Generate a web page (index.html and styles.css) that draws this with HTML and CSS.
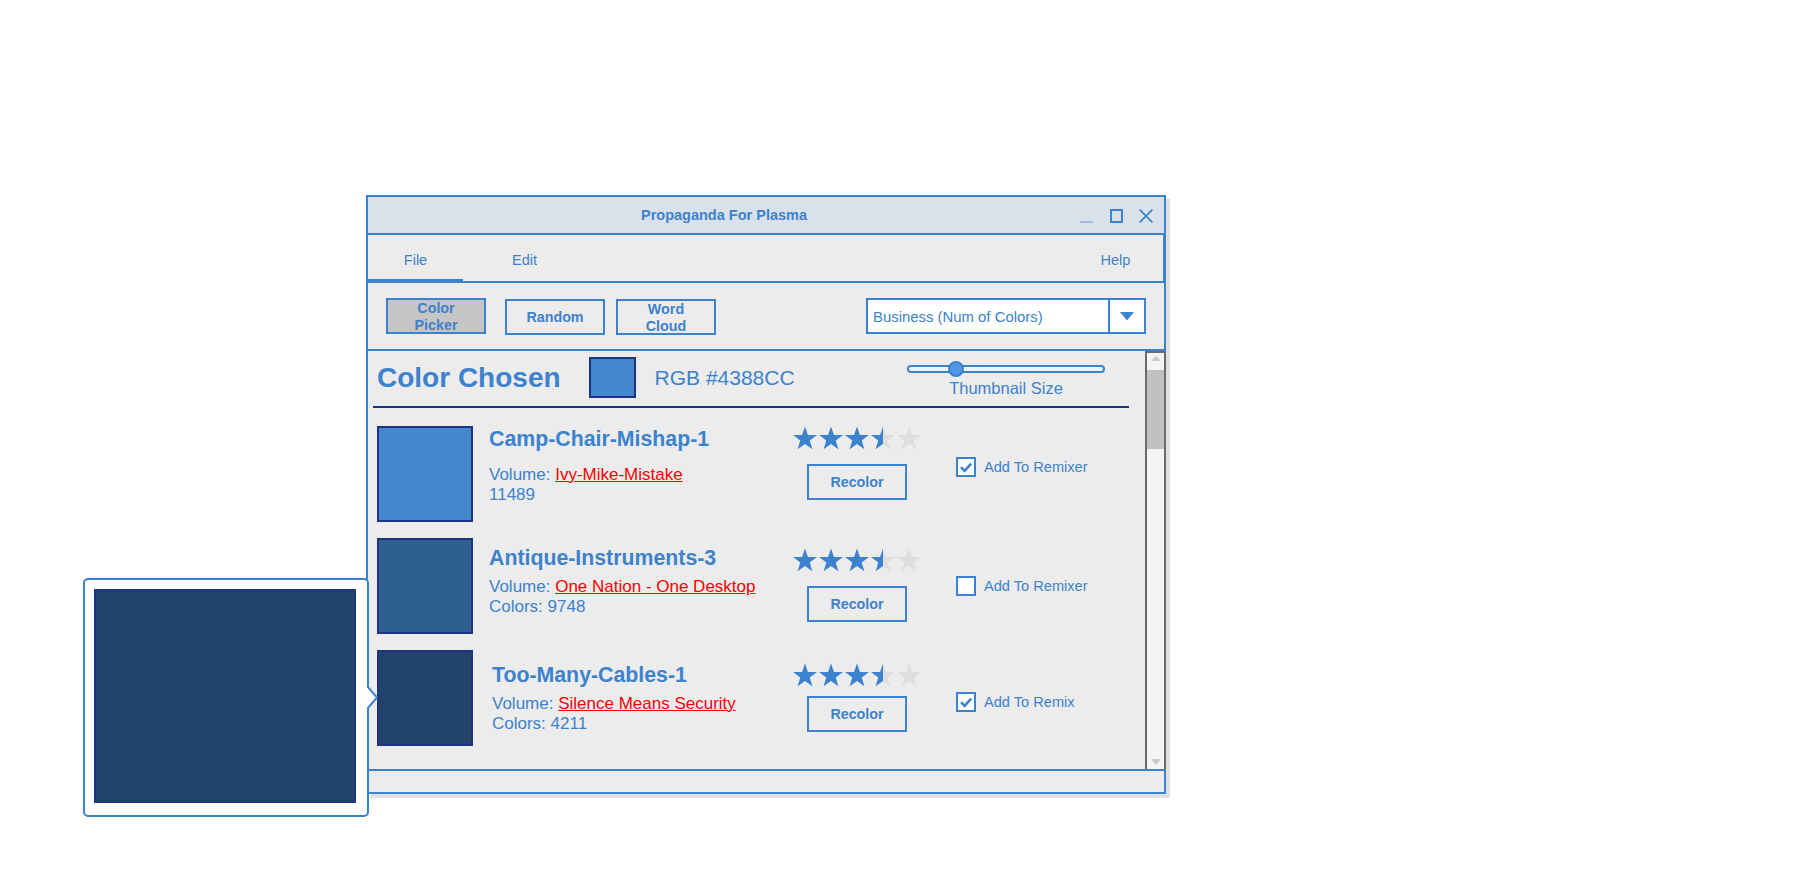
FILE: index.html
```html
<!DOCTYPE html>
<html lang="en">
<head>
<meta charset="utf-8">
<title>Propaganda For Plasma</title>
<link rel="stylesheet" href="styles.css">
</head>
<body>
<svg class="defs" width="0" height="0" aria-hidden="true">
  <defs>
    <polygon id="star" points="12,0.4 14.94,8.95 23.98,9.11 16.76,14.55 19.41,23.19 12,18 4.59,23.19 7.24,14.55 0.02,9.11 9.06,8.95"/>
    <linearGradient id="half" x1="0" y1="0" x2="1" y2="0">
      <stop offset="0.5" stop-color="#3d82cd"/>
      <stop offset="0.5" stop-color="#dedede"/>
    </linearGradient>
  </defs>
</svg>

<div class="window">
  <div class="titlebar">
    <div class="title">Propaganda For Plasma</div>
    <div class="controls">
      <svg class="ctl" width="13" height="14" viewBox="0 0 13 14"><line x1="0" y1="13" x2="13" y2="13" stroke="#9cbde6" stroke-width="2"/></svg>
      <svg class="ctl max" width="13" height="14" viewBox="0 0 13 14"><rect x="1" y="1" width="11" height="12" fill="none" stroke="#3d82cd" stroke-width="2"/></svg>
      <svg class="ctl close" width="14" height="14" viewBox="0 0 14 14"><path d="M0.6 0.6 L13.4 13.4 M13.4 0.6 L0.6 13.4" stroke="#3d82cd" stroke-width="1.6" fill="none"/></svg>
    </div>
  </div>

  <div class="menubar">
    <div class="menu-item active">File</div>
    <div class="menu-item edit">Edit</div>
    <div class="menu-item help">Help</div>
  </div>

  <div class="toolbar">
    <button class="tbtn selected">Color<br>Picker</button>
    <button class="tbtn random">Random</button>
    <button class="tbtn word">Word<br>Cloud</button>
    <div class="dropdown">
      <span class="dd-text">Business (Num of Colors)</span>
      <span class="dd-arrow"><svg width="14" height="9" viewBox="0 0 14 9"><polygon points="0,0 14,0 7,8.5" fill="#3d82cd"/></svg></span>
    </div>
  </div>

  <div class="content">
    <div class="list">
      <div class="header">
        <div class="chosen-label">Color Chosen</div>
        <div class="chosen-swatch"></div>
        <div class="rgb">RGB #4388CC</div>
        <div class="slider-group">
          <div class="slider">
            <div class="track"></div>
            <div class="knob"></div>
          </div>
          <div class="slider-label">Thumbnail Size</div>
        </div>
      </div>
      <div class="divider"></div>

      <div class="items">
        <div class="item row-1">
          <div class="thumb c1"></div>
          <div class="info">
            <div class="name">Camp-Chair-Mishap-1</div>
            <div class="meta">Volume: <a class="vol">Ivy-Mike-Mistake</a></div>
            <div class="meta">11489</div>
          </div>
          <div class="rating">
            <svg class="stars" width="128" height="24" viewBox="0 0 128 24">
              <use href="#star" x="0" fill="#3d82cd"/>
              <use href="#star" x="26" fill="#3d82cd"/>
              <use href="#star" x="52" fill="#3d82cd"/>
              <use href="#star" x="78" fill="url(#half)"/>
              <use href="#star" x="104" fill="#dedede"/>
            </svg>
            <button class="recolor">Recolor</button>
          </div>
          <label class="check">
            <svg class="box" width="20" height="20" viewBox="0 0 20 20"><rect x="1" y="1" width="18" height="18" fill="#fff" stroke="#3d82cd" stroke-width="2"/><path d="M5 10.2 L8.6 13.8 L15.2 6.6" fill="none" stroke="#3d82cd" stroke-width="2.6"/></svg>
            <span class="check-label">Add To Remixer</span>
          </label>
        </div>

        <div class="item row-2">
          <div class="thumb c2"></div>
          <div class="info">
            <div class="name">Antique-Instruments-3</div>
            <div class="meta">Volume: <a class="vol">One Nation - One Desktop</a></div>
            <div class="meta">Colors: 9748</div>
          </div>
          <div class="rating">
            <svg class="stars" width="128" height="24" viewBox="0 0 128 24">
              <use href="#star" x="0" fill="#3d82cd"/>
              <use href="#star" x="26" fill="#3d82cd"/>
              <use href="#star" x="52" fill="#3d82cd"/>
              <use href="#star" x="78" fill="url(#half)"/>
              <use href="#star" x="104" fill="#dedede"/>
            </svg>
            <button class="recolor">Recolor</button>
          </div>
          <label class="check">
            <svg class="box" width="20" height="20" viewBox="0 0 20 20"><rect x="1" y="1" width="18" height="18" fill="#fff" stroke="#3d82cd" stroke-width="2"/></svg>
            <span class="check-label">Add To Remixer</span>
          </label>
        </div>

        <div class="item row-3">
          <div class="thumb c3"></div>
          <div class="info">
            <div class="name">Too-Many-Cables-1</div>
            <div class="meta">Volume: <a class="vol">Silence Means Security</a></div>
            <div class="meta">Colors: 4211</div>
          </div>
          <div class="rating">
            <svg class="stars" width="128" height="24" viewBox="0 0 128 24">
              <use href="#star" x="0" fill="#3d82cd"/>
              <use href="#star" x="26" fill="#3d82cd"/>
              <use href="#star" x="52" fill="#3d82cd"/>
              <use href="#star" x="78" fill="url(#half)"/>
              <use href="#star" x="104" fill="#dedede"/>
            </svg>
            <button class="recolor">Recolor</button>
          </div>
          <label class="check">
            <svg class="box" width="20" height="20" viewBox="0 0 20 20"><rect x="1" y="1" width="18" height="18" fill="#fff" stroke="#3d82cd" stroke-width="2"/><path d="M5 10.2 L8.6 13.8 L15.2 6.6" fill="none" stroke="#3d82cd" stroke-width="2.6"/></svg>
            <span class="check-label">Add To Remix</span>
          </label>
        </div>
      </div>
    </div>

    <div class="scrollbar">
      <svg class="sb-up" width="10" height="5" viewBox="0 0 10 5"><polygon points="0,5 10,5 5,0" fill="#c8c8c8"/></svg>
      <div class="sb-thumb"></div>
      <div class="sb-fill"></div>
      <svg class="sb-down" width="10" height="6" viewBox="0 0 10 6"><polygon points="0,0 10,0 5,6" fill="#c8c8c8"/></svg>
    </div>
  </div>

  <div class="statusbar"></div>
</div>

<div class="popup">
  <div class="popup-swatch"></div>
  <svg class="popup-arrow" width="12" height="21" viewBox="0 0 12 21"><rect x="0" y="1" width="3.6" height="19" fill="#fff"/><polygon points="2,0.5 11,10.5 2,20.5" fill="#fff"/><polyline points="2,0 11,10.5 2,21" fill="none" stroke="#3d82cd" stroke-width="2"/></svg>
</div>
</body>
</html>
```

FILE: styles.css
```css
* {
  box-sizing: border-box;
}

html,
body {
  margin: 0;
  padding: 0;
  background: #ffffff;
}

body {
  position: relative;
  width: 1798px;
  height: 876px;
  overflow: hidden;
  font-family: "Liberation Sans", Arial, sans-serif;
  color: #3d82cd;
}

.defs {
  position: absolute;
  width: 0;
  height: 0;
  overflow: hidden;
}

/* ---------- window ---------- */
.window {
  position: absolute;
  left: 366px;
  top: 195px;
  width: 800px;
  height: 599px;
  border: 2px solid #3d82cd;
  background: #ececec;
  box-shadow: 4px 4px 0 #e1e1e1;
  display: flex;
  flex-direction: column;
}

.titlebar {
  height: 38px;
  flex: none;
  display: flex;
  align-items: center;
  background: #d9e1ea;
  border-bottom: 2px solid #3d82cd;
}

.title {
  flex: 1;
  text-align: center;
  font-size: 14.5px;
  font-weight: bold;
}

.controls {
  width: 84px;
  padding-right: 11px;
  padding-top: 2px;
  display: flex;
  align-items: center;
}

.ctl {
  display: block;
}

.ctl.max {
  margin-left: 17px;
}

.ctl.close {
  margin-left: 16px;
}

/* ---------- menu ---------- */
.menubar {
  height: 48px;
  flex: none;
  display: flex;
  border-bottom: 2px solid #3d82cd;
  border-right: 1px solid #3d82cd;
}

.menu-item {
  width: 95px;
  height: 46px;
  padding-top: 5px;
  line-height: 41px;
  text-align: center;
  font-size: 14.5px;
}

.menu-item.active {
  box-shadow: inset 0 -2px 0 #3d82cd;
}

.menu-item.edit {
  margin-left: 14px;
}

.menu-item.help {
  margin-left: auto;
}

/* ---------- toolbar ---------- */
.toolbar {
  height: 68px;
  flex: none;
  display: flex;
  align-items: center;
  padding: 0 18px;
  border-bottom: 2px solid #3d82cd;
}

.tbtn {
  width: 100px;
  height: 36px;
  padding: 0;
  border: 2px solid #3d82cd;
  background: transparent;
  color: #3d82cd;
  font-family: "Liberation Sans", Arial, sans-serif;
  font-size: 14.3px;
  font-weight: bold;
  line-height: 16.5px;
}

.tbtn.selected {
  background: #c5c5c5;
}

.tbtn.random {
  margin-left: 19px;
  margin-top: 2px;
}

.tbtn.word {
  margin-left: 11px;
  margin-top: 2px;
}

.dropdown {
  margin-left: auto;
  width: 280px;
  height: 36px;
  display: flex;
  border: 2px solid #3d82cd;
  background: #ffffff;
}

.dd-text {
  flex: 1;
  padding-left: 5px;
  padding-top: 1px;
  font-size: 14.9px;
  line-height: 32px;
}

.dd-arrow {
  width: 36px;
  border-left: 2px solid #3d82cd;
  display: flex;
  align-items: center;
  justify-content: center;
}

.dd-arrow svg {
  display: block;
}

/* ---------- content ---------- */
.content {
  height: 420px;
  flex: none;
  display: flex;
  margin-right: -2px;
  border-bottom: 2px solid #3d82cd;
  overflow: hidden;
}

.list {
  flex: 1;
  min-width: 0;
}

.header {
  height: 53px;
  display: flex;
  align-items: center;
  padding-left: 9px;
}

.chosen-label {
  font-size: 28px;
  font-weight: bold;
  line-height: 32px;
}

.chosen-swatch {
  width: 47px;
  height: 41px;
  margin-left: 28px;
  background: #4388cc;
  border: 2px solid #1e3482;
}

.rgb {
  margin-left: 19px;
  font-size: 21px;
  line-height: 24px;
}

.slider-group {
  align-self: flex-start;
  margin-top: 10px;
  margin-left: auto;
  margin-right: 40px;
  width: 198px;
}

.slider {
  position: relative;
  height: 16px;
}

.track {
  position: absolute;
  left: 0;
  right: 0;
  top: 4px;
  height: 8px;
  border: 2px solid #3d82cd;
  border-radius: 4px;
  background: #f4f4f4;
}

.knob {
  position: absolute;
  left: 41px;
  top: 0;
  width: 16px;
  height: 16px;
  border-radius: 50%;
  border: 2px solid #3d82cd;
  background: #4e97e6;
}

.slider-label {
  margin-top: 2px;
  text-align: center;
  font-size: 16.5px;
  line-height: 19px;
}

.divider {
  height: 2px;
  margin: 2px 16px 0 5px;
  background: #1e3482;
}

/* ---------- items ---------- */
.items {
  margin-top: 18px;
  padding-left: 9px;
  display: flex;
  flex-direction: column;
  gap: 16px;
}

.item {
  height: 96px;
  display: flex;
  align-items: flex-start;
}

.thumb {
  width: 96px;
  height: 96px;
  flex: none;
  border: 2px solid #1e3482;
}

.thumb.c1 {
  background: #4388cc;
}

.thumb.c2 {
  background: #2e5f8e;
}

.thumb.c3 {
  background: #22436a;
}

.info {
  width: 304px;
  margin-left: 16px;
  flex: none;
  white-space: nowrap;
}

.name {
  font-size: 21.3px;
  font-weight: bold;
  line-height: 23px;
}

.meta {
  font-size: 17px;
  line-height: 19.5px;
}

.vol {
  color: #ff0000;
  text-decoration: underline;
}

.rating {
  width: 128px;
  flex: none;
  display: flex;
  flex-direction: column;
  align-items: center;
}

.stars {
  display: block;
}

.recolor {
  width: 100px;
  height: 36px;
  padding: 0;
  border: 2px solid #3d82cd;
  background: transparent;
  color: #3d82cd;
  font-family: "Liberation Sans", Arial, sans-serif;
  font-size: 14.3px;
  font-weight: bold;
}

.check {
  margin-left: 35px;
  display: flex;
  align-items: center;
}

.box {
  display: block;
  flex: none;
}

.check-label {
  margin-left: 8px;
  font-size: 14.6px;
  line-height: 20px;
}

/* per-row vertical offsets */
.row-1 .info { padding-top: 2px; }
.row-1 .name { margin-bottom: 14px; }
.row-1 .stars { margin-top: 0; }
.row-1 .recolor { margin-top: 14px; }
.row-1 .check { margin-top: 31px; }

.row-2 .info { padding-top: 9px; }
.row-2 .name { margin-bottom: 7px; }
.row-2 .stars { margin-top: 10px; }
.row-2 .recolor { margin-top: 14px; }
.row-2 .check { margin-top: 38px; }

.row-3 .info { padding-top: 14px; margin-left: 19px; width: 301px; }
.row-3 .name { margin-bottom: 7px; }
.row-3 .stars { margin-top: 13px; }
.row-3 .recolor { margin-top: 9px; }
.row-3 .check { margin-top: 42px; }

/* ---------- scrollbar ---------- */
.scrollbar {
  width: 21px;
  flex: none;
  display: flex;
  flex-direction: column;
  align-items: center;
  background: #f4f4f4;
  border: 2px solid #6b6b6b;
  border-bottom: none;
}

.sb-up {
  display: block;
  margin-top: 3px;
}

.sb-thumb {
  width: 100%;
  height: 79px;
  margin-top: 9px;
  background: #c1c1c1;
}

.sb-fill {
  flex: 1;
}

.sb-down {
  display: block;
  margin-bottom: 4px;
}

.statusbar {
  flex: 1;
}

/* ---------- popup preview ---------- */
.popup {
  position: absolute;
  left: 83px;
  top: 578px;
  width: 286px;
  height: 239px;
  padding: 9px;
  border: 2px solid #3d82cd;
  border-radius: 5px;
  background: #ffffff;
}

.popup-swatch {
  width: 262px;
  height: 214px;
  background: #22436a;
  border: 2px solid #1e3482;
}

.popup-arrow {
  position: absolute;
  left: 281px;
  top: 107px;
  display: block;
}
```
